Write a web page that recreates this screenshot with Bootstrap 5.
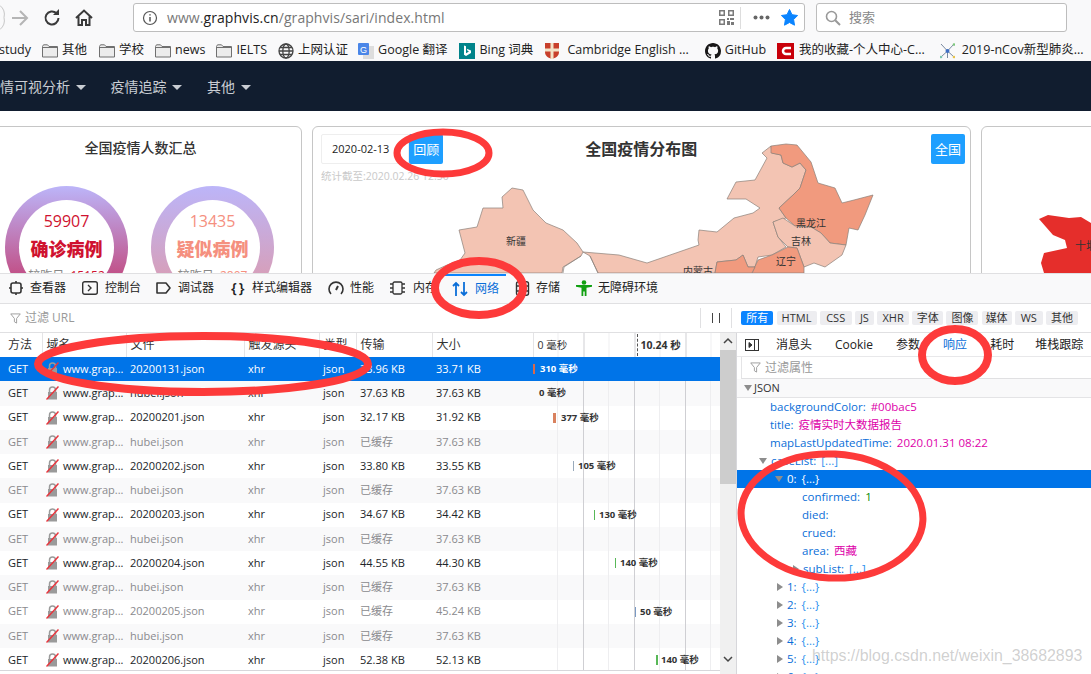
<!DOCTYPE html>
<html lang="zh-CN">
<head>
  <meta charset="UTF-8">
  <meta name="viewport" content="width=device-width, initial-scale=1.0">
  <title>疫情可视分析</title>
  <link href="https://cdn.jsdelivr.net/npm/bootstrap@5.3.0/dist/css/bootstrap.min.css" rel="stylesheet">
  <style>
    html, body { height: 100%; }
    body {
      width: 1091px;
      height: 674px;
      overflow: hidden;
      position: relative;
      font-family: "Open Sans", "Noto Sans CJK SC", sans-serif;
      font-size: 12px;
      color: #222;
      background: #fff;
    }

    /* browser chrome */
    .top-bar { height: 40px; background: #f9f9fa; padding: 3px 24px 0 0; }
    .nav-btns { width: 133px; height: 29px; }
    .url-box, .search-box {
      height: 29px;
      background: #fff;
      border: 1px solid #bdbdbd;
      border-radius: 3px;
    }
    .url-box { width: 672px; margin-right: 11px; padding: 0 6px 0 8px; color: #777; font-size: 14px; }
    .url-box b { font-weight: 400; color: #222; }
    .search-box { width: 251px; padding: 0 8px; color: #888; font-size: 13px; }
    .url-text { margin-left: 9px; white-space: nowrap; letter-spacing: .07px; }
    .url-sep { width: 1px; height: 22px; background: #ddd; margin: 0 12px 0 6px; }
    .marks { height: 21px; background: #f9f9fa; font-size: 12.5px; white-space: nowrap; color: #222; overflow: hidden; }
    .mark-item { display: flex; align-items: center; gap: 4px; flex: none; }

    /* page */
    .site-nav { height: 50px; background: #111d2f; padding: 0; }
    .site-nav .nav-link { color: #c9cdd3; font-size: 14px; padding: 0; margin-right: 25px; }
    .site-nav .nav-link:first-child { margin-left: -14px; }
    .site-nav .dropdown-toggle::after { border-top: .42em solid; border-right: .42em solid transparent; border-left: .42em solid transparent; border-bottom: 0; margin-left: 5.5px; vertical-align: .1em; }
    .page-area { height: 162px; overflow: hidden; position: relative; padding-top: 15px; gap: 10px; margin-left: -21px; }
    .map-layer { position: absolute; left: 21px; top: 0; width: 1091px; height: 162px; }
    .sum-card, .map-card, .city-card { height: 220px; border-color: #c6c6c6; border-radius: 6px; flex: none; }
    .sum-card { width: 323px; }
    .map-card { width: 659px; padding: 7px 5px 0 8px; }
    .city-card { width: 140px; }
    .sum-title { text-align: center; font-size: 14px; font-weight: 500; color: #333; margin-top: 11px; line-height: 20px; }
    .rings { gap: 23px; margin: 28px 0 0 25px; }
    .ring { width: 123px; height: 123px; border-radius: 50%; padding: 14px; flex: none; }
    .ring-red { background: linear-gradient(#bcb5f9, #c32a5c); }
    .ring-pink { background: linear-gradient(#bcb5f9, #e097a3); }
    .ring-in { background: #fff; border-radius: 50%; height: 100%; text-align: center; padding-top: 11px; }
    .ring-num { font-size: 16px; line-height: 20px; }
    .ring-name { font-size: 18px; font-weight: 900; line-height: 28px; margin-top: 4px; white-space: nowrap; }
    .ring-sub { font-size: 12px; color: #888; line-height: 18px; white-space: nowrap; margin-top: 4px; }
    .red-txt { color: #cf1230; }
    .pink-txt { color: #f5907f; }
    .date-box { width: 89px; height: 30px; border: 1px solid #eee; border-radius: 2px 0 0 2px; font-size: 11px; line-height: 28px; padding-left: 10px; color: #222; }
    .blue-btn { width: 34px; height: 30px; background: #1e9fff; color: #fff; border-radius: 2px; font-size: 13px; line-height: 30px; text-align: center; padding: 0; border: 0; }
    .stat-note { color: #c9c9c9; font-size: 10.5px; line-height: 14px; margin-top: 5px; white-space: nowrap; }
    .map-title { font-size: 16px; font-weight: 700; color: #333; line-height: 30px; width: 112px; white-space: nowrap; margin: 0 234px 0 142px; }

    /* devtools */
    .dev { height: 401px; background: #fff; border-top: 1px solid #e0e0e2; position: relative; }
    .dev-tabs { height: 30px; background: #f9f9fa; border-bottom: 1px solid #e0e0e2; color: #222; padding: 0 0 1px 9px; }
    .dev-tab { display: flex; align-items: center; gap: 7px; flex: none; height: 100%; white-space: nowrap; }
    .dev-tab.on { color: #0a6ed8; border-top: 2px solid #0a84ff; width: 62px; padding-left: 8px; margin: 0 9px 0 -8px; }
    .curly-ico { font-size: 15px; font-weight: 600; width: 16px; line-height: 14px; white-space: nowrap; letter-spacing: -1px; margin-top: -3px; }
    .filter-bar { height: 29px; border-bottom: 1px solid #e0e0e2; color: #999; font-size: 12px; padding-left: 10px; }
    .bar-sep { width: 1px; height: 20px; background: #e0e0e2; }
    .pause-ico { margin: 0 10px; }
    .type-chip { height: 14px; line-height: 14px; font-size: 11px; background: #ededf0; color: #333; border-radius: 2px; text-align: center; flex: none; margin-right: 3.2px; }
    .type-chip.on { background: #0a84ff; color: #fff; }
    .split-box { height: 342px; }
    .req-side { width: 737px; flex: none; position: relative; border-right: 1px solid #d7d7db; }
    .req-scroll { width: 720px; flex: none; height: 338px; overflow: hidden; border-bottom: 1px solid #d7d7db; }
    .sb-rail { width: 16px; flex: none; background: #f0f0f0; }
    .sb-thumb { height: 134px; background: #cdcdcd; margin-top: 17px; }
    .sb-down { margin-top: 166px; }
    .req-table { table-layout: fixed; width: 720px; margin: 0; font-size: 11px; white-space: nowrap; }
    .req-table th, .req-table td { padding: 0 0 0 4px; border: 0; overflow: hidden; background: transparent; color: inherit; box-shadow: none; vertical-align: middle; }
    .req-table thead th { height: 24px; font-size: 12px; font-weight: 400; color: #333; border-right: 1px solid #e4e4e6; background: #fff; }
    .req-table tbody tr { height: 24.25px; }
    .req-table tbody tr:nth-child(even) { background: #f9f9fa; }
    .req-table tr.dim { color: #8a8a8e; }
    .req-table tr.sel { background: #0074e8 !important; color: #fff; }
    .req-table .wf, .req-table thead th.wf {
      padding: 0;
      background: repeating-linear-gradient(90deg, transparent 0 24.5px, #eeeef0 24.5px 25.5px, transparent 25.5px 50px, #cfcfd3 50px 51px);
    }
    .req-table tr.sel td.wf { background: none; }
    .wf-head { font-size: 10.5px; padding-left: 4px; }
    .wf-mark { border-left: 1px dashed #555; padding-left: 3px; margin-left: 49px; font-weight: 700; line-height: 22px; }
    .wf-bar { height: 10px; flex: none; }
    .wf-txt { font-size: 9.5px; font-weight: 700; color: #333; }
    .sel .wf-txt { color: #fff; }
    .detail-side { flex: 1; min-width: 0; overflow: hidden; }
    .detail-tabs { height: 24px; white-space: nowrap; color: #222; font-size: 12px; border-bottom: 1px solid #e8e8ea; background: #fff; }
    .prop-filter { height: 22px; border-bottom: 1px solid #e0e0e2; color: #999; font-size: 12px; padding-left: 8px; margin-left: 4px; border-left: 1px solid #e4e4e6; gap: 4px; }
    .json-head { height: 19px; background: #f9f9fa; border-bottom: 1px solid #e4e4e6; font-size: 11px; padding-left: 7px; color: #333; gap: 3px; }
    .tree-row { height: 18px; line-height: 18px; font-size: 11.5px; white-space: nowrap; color: #0a6ed8; display: flex; align-items: center; gap: 5px; }
    .tree-row.sel { background: #0074e8; color: #fff; }
    .tree-row.sel .v-obj { color: #fff; }
    .v-str { color: #dd00a9; }
    .v-num { color: #058b00; }
    .v-obj { color: #2a8fee; }
    .tw { width: 0; height: 0; border-style: solid; flex: none; margin-right: -1px; }
    .tw-r { border-width: 4.5px 0 4.5px 6px; border-color: transparent transparent transparent #8d8d8d; }
    .tw-d { border-width: 6px 4.5px 0 4.5px; border-color: #8d8d8d transparent transparent transparent; }

    /* marker strokes and the site watermark sit over everything */
    .marker-layer { position: absolute; left: 0; top: 0; width: 1091px; height: 674px; pointer-events: none; z-index: 5; }
    .watermark { position: absolute; left: 812px; top: 644px; font-family: "Liberation Sans", sans-serif; font-size: 15.9px; color: rgba(150,150,150,.45); z-index: 4; white-space: nowrap; }
    svg { display: block; flex: none; }
  </style>
</head>
<body>
  <svg width="0" height="0" class="position-absolute">
    <symbol id="folder" viewBox="0 0 16 14"><path d="M.5 2.500V13h15V2.500H7L5.500.8H1.500Z" fill="#ececec" stroke="#707070"/><path d="M.5 3.500h15" stroke="#707070"/></symbol>
    <symbol id="lock" viewBox="0 0 13 14"><rect x="2" y="6" width="9" height="7.500" fill="#9a9a9a"/><path d="M3.500 6V4a3 3 0 0 1 6 0v2" fill="none" stroke="#9a9a9a" stroke-width="1.500"/><path d="M.5 13.500 12.500 .5" stroke="#e8343c" stroke-width="1.500"/></symbol>
    <symbol id="funnel" viewBox="0 0 12 12"><path d="M.8 1h10.400L7.200 6v5L4.800 9.600V6Z" fill="none" stroke="#999"/></symbol>
  </svg>

  <div class="top-bar d-flex">
    <div class="nav-btns d-flex align-items-center position-relative">
      <svg width="133" height="29" viewBox="0 0 133 29">
        <path d="M0 2.500a12 12 0 0 1 4 12 12 12 0 0 1-4 12" fill="none" stroke="#c6c6c6"/>
        <path d="M12 15h15M20 8l7 7-7 7" fill="none" stroke="#b5b5b5" stroke-width="2"/>
        <path d="M58.500 15a6.500 6.500 0 1 1-2-4.800" fill="none" stroke="#3a3a3a" stroke-width="2"/>
        <path d="M59 6v6h-6Z" fill="#3a3a3a"/>
        <path d="M76 15l8-7.500 8 7.500M78.500 13.500V22h3.500v-5h4v5h3.500v-8.500" fill="none" stroke="#3a3a3a" stroke-width="2"/>
      </svg>
    </div>
    <div class="url-box d-flex align-items-center">
      <svg width="16" height="16" viewBox="0 0 16 16"><circle cx="8" cy="8" r="6.500" fill="none" stroke="#555" stroke-width="1.200"/><path d="M8 7v4.500M8 4.200v1.400" stroke="#555" stroke-width="1.500"/></svg>
      <span class="url-text">www.<b>graphvis.cn</b>/graphvis/sari/index.html</span>
      <span class="flex-grow-1"></span>
      <svg width="15" height="15" viewBox="0 0 15 15" fill="#7a7a7a"><path d="M0 0h6v6H0Zm1.500 1.500v3h3v-3ZM9 0h6v6H9Zm1.500 1.500v3h3v-3ZM0 9h6v6H0Zm1.500 1.500v3h3v-3ZM8 8h2v2H8Zm3 0h4v2h-4Zm-3 3h3v4H8Zm4 1h3v3h-3Z"/></svg>
      <span class="url-sep"></span>
      <svg width="17" height="5" viewBox="0 0 17 5" fill="#666"><circle cx="2.500" cy="2.500" r="2"/><circle cx="8.500" cy="2.500" r="2"/><circle cx="14.500" cy="2.500" r="2"/></svg>
      <svg width="17" height="17" viewBox="0 0 17 17" style="margin-left:11px"><path d="M8.500.5l2.500 5.200 5.600.8-4 4 .9 5.700-5-2.700-5 2.700.9-5.700-4-4 5.600-.8Z" fill="#0a84ff" stroke="#0a84ff" stroke-linejoin="round"/></svg>
    </div>
    <div class="search-box d-flex align-items-center gap-2">
      <svg width="16" height="16" viewBox="0 0 16 16"><circle cx="6.500" cy="6.500" r="5" fill="none" stroke="#999" stroke-width="1.600"/><path d="M10.200 10.200 15 15" stroke="#999" stroke-width="2"/></svg>
      <span>搜索</span>
    </div>
  </div>

  <div class="marks d-flex align-items-center">
    <span class="mark-item" style="margin-left:-1px">study</span>
    <span class="mark-item" style="margin-left:11px"><svg width="16" height="14"><use href="#folder"/></svg>其他</span>
    <span class="mark-item" style="margin-left:12px"><svg width="16" height="14"><use href="#folder"/></svg>学校</span>
    <span class="mark-item" style="margin-left:11px"><svg width="16" height="14"><use href="#folder"/></svg>news</span>
    <span class="mark-item" style="margin-left:11px"><svg width="16" height="14"><use href="#folder"/></svg>IELTS</span>
    <span class="mark-item" style="margin-left:11px"><svg width="16" height="16" viewBox="0 0 16 16" fill="none" stroke="#444" stroke-width="1.300"><circle cx="8" cy="8" r="7"/><ellipse cx="8" cy="8" rx="3.200" ry="7"/><path d="M1 8h14M2 4.500h12M2 11.500h12"/></svg>上网认证</span>
    <span class="mark-item" style="margin-left:10px"><svg width="16" height="16" viewBox="0 0 16 16"><rect x="5" y="3" width="11" height="13" fill="#ddd"/><rect width="11" height="12" rx="1" fill="#4a86e8"/><text x="5.500" y="9.500" font-size="9" fill="#fff" text-anchor="middle" font-family="Liberation Sans">G</text></svg>Google 翻译</span>
    <span class="mark-item" style="margin-left:12px"><svg width="16" height="16" viewBox="0 0 16 16"><rect width="16" height="16" fill="#00838a"/><path d="M5 2.500 7 3.200v7l3-1.600-1.500-.8-.8-2L12 7.500v2.600L7 13l-2-1.200Z" fill="#fff"/></svg>Bing 词典</span>
    <span class="mark-item" style="margin-left:12px;gap:8px"><svg width="14" height="16" viewBox="0 0 14 16"><path d="M0 0h14v9c0 4-3.500 6-7 7-3.500-1-7-3-7-7Z" fill="#c8402c"/><path d="M5.500 0h3v16h-3ZM0 5.500h14v3H0Z" fill="#f3e3c8"/></svg>Cambridge English ...</span>
    <span class="mark-item" style="margin-left:16px"><svg width="16" height="16" viewBox="0 0 16 16"><path fill="#181717" d="M8 0C3.580 0 0 3.580 0 8c0 3.540 2.290 6.530 5.470 7.590.4.070.55-.17.55-.38 0-.19-.01-.82-.01-1.490-2.010.37-2.530-.49-2.690-.94-.09-.23-.48-.94-.82-1.130-.28-.15-.68-.52-.01-.53.63-.01 1.080.58 1.230.82.72 1.210 1.870.87 2.330.66.07-.52.28-.87.51-1.070-1.780-.2-3.640-.89-3.640-3.950 0-.87.31-1.590.82-2.150-.08-.2-.36-1.020.08-2.120 0 0 .67-.21 2.200.82.64-.18 1.320-.27 2-.27.68 0 1.360.09 2 .27 1.530-1.040 2.200-.82 2.200-.82.44 1.100.16 1.920.08 2.120.51.56.82 1.270.82 2.150 0 3.070-1.870 3.750-3.650 3.950.29.25.54.73.54 1.480 0 1.070-.01 1.930-.01 2.200 0 .21.15.46.55.38A8.013 8.013 0 0016 8c0-4.420-3.580-8-8-8z"/></svg>GitHub</span>
    <span class="mark-item" style="margin-left:11px;gap:5px"><svg width="17" height="16" viewBox="0 0 17 16"><rect width="17" height="16" fill="#c8000a"/><path d="M14 5H9a3 3 0 0 0 0 6h5" fill="none" stroke="#fff" stroke-width="2.500"/></svg>我的收藏-个人中心-C...</span>
    <span class="mark-item" style="margin-left:15px;gap:7px"><svg width="15" height="16" viewBox="0 0 15 16"><path d="M1 1l6.500 7L14 1M1 14l6.500-6L14 14M7.500 8v7" stroke="#7a8aa0" fill="none"/><circle cx="7.500" cy="8" r="2" fill="#3f6fc4"/><circle cx="14" cy="1.500" r="1.300" fill="#7cc67c"/><circle cx="1" cy="14" r="1.300" fill="#7cc6b0"/><circle cx="14" cy="14" r="1.300" fill="#e6c34d"/></svg>2019-nCov新型肺炎...</span>
  </div>

  <nav class="navbar site-nav flex-nowrap justify-content-start">
    <a class="nav-link dropdown-toggle" href="#">疫情可视分析</a>
    <a class="nav-link dropdown-toggle" href="#">疫情追踪</a>
    <a class="nav-link dropdown-toggle" href="#">其他</a>
  </nav>

  <div class="page-area d-flex">
    <div class="card sum-card">
      <div class="sum-title">全国疫情人数汇总</div>
      <div class="rings d-flex">
        <div class="ring ring-red"><div class="ring-in">
          <div class="ring-num red-txt">59907</div>
          <div class="ring-name red-txt">确诊病例</div>
          <div class="ring-sub">较昨日: <span class="red-txt">15152</span></div>
        </div></div>
        <div class="ring ring-pink"><div class="ring-in">
          <div class="ring-num pink-txt">13435</div>
          <div class="ring-name pink-txt">疑似病例</div>
          <div class="ring-sub">较昨日: <span class="pink-txt">2807</span></div>
        </div></div>
      </div>
    </div>
    <div class="card map-card">
      <div class="d-flex">
        <div class="date-box">2020-02-13</div>
        <button class="blue-btn">回顾</button>
        <div class="map-title">全国疫情分布图</div>
        <button class="blue-btn">全国</button>
      </div>
      <div class="stat-note">统计截至:2020.02.26 12:30</div>
    </div>
    <div class="card city-card"></div>

    <svg class="map-layer" viewBox="0 111 1091 162" font-family="'Noto Sans CJK SC',sans-serif" font-size="10" fill="#333">
      <g stroke="#8a8078" stroke-width=".7" stroke-linejoin="round">
        <path fill="#f3c4b3" d="M512 188 523 190 528 200 533 210 546 223 563 230 577 243 583 252 581 256 563 267 562 273H434L436 270 447 265 460 260 465 253 459 230 477 227 483 208 503 208 502 197Z"/>
        <path fill="#f3c4b3" d="M583 252 619 255 647 263 699 245 698 240 699 230 717 232 734 218 753 213 760 208 746 199 727 199 736 182 755 180 767 158 762 153 771 146 772 153 781 155 783 163 792 167 800 163 806 170 800 188 793 195 779 208 786 218 773 222 778 237 786 247 772 255 758 257 755 267 748 267 743 255 736 260 717 262 715 273H598L590 256Z"/>
        <path fill="#f19a7e" d="M771 146 786 144 797 145 811 162 818 183 835 188 842 203 854 200 873 195 865 215 858 230 849 228 846 245 830 243 821 233 811 227 795 226 786 218 779 208 793 195 800 188 806 170 800 163 792 167 783 163 781 155 771 153Z"/>
        <path fill="#f3c4b3" d="M773 222 783 218 795 226 811 227 821 233 830 243 846 245 842 255 825 267 814 263 804 267 797 248 788 247 778 237Z"/>
        <path fill="#f19a7e" d="M788 247 797 248 804 267 804 273H752L758 260 772 255Z"/>
        <path fill="#f19a7e" d="M715 273 717 262 736 260 743 255 748 267 755 267 752 273Z"/>
        <path fill="none" d="M563 273 564 267 581 256M590 256 598 273"/>
      </g>
      <path fill="#e52e2b" d="M1039 219 1048 215 1069 218 1081 217 1091 223V273H1044L1041 263 1044 253 1067 248 1065 240 1053 235Z"/>
      <text x="506" y="245">新疆</text>
      <text x="796" y="227">黑龙江</text>
      <text x="791" y="245">吉林</text>
      <text x="776" y="265">辽宁</text>
      <text x="683" y="275">内蒙古</text>
      <text x="1075" y="250" font-size="11">十堰</text>
    </svg>
  </div>

  <div class="dev">
    <div class="dev-tabs d-flex align-items-center">
      <span class="dev-tab" style="width:73px"><svg width="14" height="14" viewBox="0 0 14 14" fill="none" stroke="#333" stroke-width="1.600"><rect x="2" y="2" width="10" height="10" rx="2"/><path d="M7 0v2M7 12v2M0 7h2M12 7h2"/></svg>查看器</span>
      <span class="dev-tab" style="width:74px"><svg width="16" height="14" viewBox="0 0 16 14" fill="none" stroke="#333" stroke-width="1.400"><rect x=".7" y=".7" width="14.600" height="12.600" rx="2"/><path d="M6 4l3 3-3 3"/></svg>控制台</span>
      <span class="dev-tab" style="width:75px"><svg width="15" height="12" viewBox="0 0 15 12" fill="none" stroke="#333" stroke-width="1.600"><path d="M1 1h9l4 5-4 5H1Z" stroke-linejoin="round"/></svg>调试器</span>
      <span class="dev-tab" style="width:97px;gap:5px"><span class="curly-ico">{ }</span>样式编辑器</span>
      <span class="dev-tab" style="width:62px;gap:6px"><svg width="16" height="14" viewBox="0 0 16 14" fill="none" stroke="#333" stroke-width="1.600"><path d="M3 13a7 7 0 1 1 10 0"/><path d="M8 9l2-4" stroke-width="2"/></svg>性能</span>
      <span class="dev-tab" style="width:62px;gap:8px"><svg width="15" height="14" viewBox="0 0 15 14" fill="none" stroke="#333" stroke-width="1.300"><rect x="3" y="1" width="9" height="12" rx="1.500"/><path d="M0 3h3M0 7h3M0 11h3M12 3h3M12 7h3M12 11h3"/></svg>内存</span>
      <span class="dev-tab on"><svg width="16" height="16" viewBox="0 0 16 16" fill="none" stroke="#0a6ed8" stroke-width="1.800"><path d="M4 15V2M1 5l3-3 3 3M12 1v13M9 11l3 3 3-3"/></svg>网络</span>
      <span class="dev-tab" style="width:61px;gap:6px"><svg width="15" height="15" viewBox="0 0 15 15" fill="none" stroke="#333" stroke-width="1.400"><rect x="1.500" y=".7" width="12" height="13.600" rx="2"/><path d="M1.500 5h12M1.500 10h12"/></svg>存储</span>
      <span class="dev-tab" style="gap:6px"><svg width="16" height="16" viewBox="0 0 16 16" fill="#12a012"><circle cx="8" cy="2.500" r="2.300"/><path d="M0 5h16v1.800l-5.500 1V16H8.700v-4.500H7.300V16H5.500V7.800L0 6.800Z"/></svg>无障碍环境</span>
    </div>

    <div class="filter-bar d-flex align-items-center">
      <svg width="11" height="11"><use href="#funnel"/></svg>
      <span class="ms-1">过滤 URL</span>
      <span class="flex-grow-1"></span>
      <span class="bar-sep"></span>
      <svg width="10" height="10" viewBox="0 0 10 10" class="pause-ico" stroke="#444"><path d="M1.500 0v10M8.500 0v10"/></svg>
      <span class="bar-sep" style="margin-right:9px"></span>
      <span class="type-chip on" style="width:32px">所有</span>
      <span class="type-chip" style="width:40px">HTML</span>
      <span class="type-chip" style="width:32px">CSS</span>
      <span class="type-chip" style="width:19px">JS</span>
      <span class="type-chip" style="width:32px">XHR</span>
      <span class="type-chip" style="width:31px">字体</span>
      <span class="type-chip" style="width:32px">图像</span>
      <span class="type-chip" style="width:30px">媒体</span>
      <span class="type-chip" style="width:28px">WS</span>
      <span class="type-chip" style="width:32px;margin-right:13px">其他</span>
    </div>

    <div class="split-box d-flex">
      <div class="req-side d-flex">
        <div class="req-scroll">
          <table class="table req-table">
            <colgroup><col style="width:42px"><col style="width:84px"><col style="width:118px"><col style="width:75px"><col style="width:37px"><col style="width:76px"><col style="width:101px"><col></colgroup>
            <thead><tr>
              <th class="ps-2">方法</th><th>域名</th><th>文件</th><th>触发源头</th><th>类型</th><th>传输</th><th>大小</th>
              <th class="border-0 wf">
                <div class="d-flex wf-head"><span style="width:50px;line-height:22px">0 毫秒</span><span class="wf-mark">10.24 秒</span></div>
              </th>
            </tr></thead>
            <tbody id="reqRows"></tbody>
          </table>
        </div>
        <div class="sb-rail">
          <svg width="16" height="17" viewBox="0 0 16 17" class="position-absolute"><path d="M4 10l4-4 4 4" fill="none" stroke="#444" stroke-width="1.500"/></svg>
          <div class="sb-thumb"></div>
          <svg width="16" height="17" viewBox="0 0 16 17" class="sb-down"><path d="M4 7l4 4 4-4" fill="none" stroke="#444" stroke-width="1.500"/></svg>
        </div>
      </div>

      <div class="detail-side">
        <div class="detail-tabs d-flex align-items-center">
          <svg width="14" height="12" viewBox="0 0 14 12" class="ms-2" fill="none" stroke="#333"><rect x=".5" y=".5" width="13" height="11"/><path d="M9.500 .5v11"/><path d="M4 3.500 7 6l-3 2.500Z" fill="#333"/></svg>
          <span style="margin-left:17px">消息头</span>
          <span style="margin-left:23px">Cookie</span>
          <span style="margin-left:23px">参数</span>
          <span style="margin-left:23px;color:#0a6ed8">响应</span>
          <span style="margin-left:23px">耗时</span>
          <span style="margin-left:21px">堆栈跟踪</span>
        </div>
        <div class="prop-filter d-flex align-items-center">
          <svg width="11" height="11"><use href="#funnel"/></svg>
          <span>过滤属性</span>
        </div>
        <div class="json-head d-flex align-items-center"><span class="tw tw-d"></span><span>JSON</span></div>
        <div id="jsonTree"></div>
      </div>
    </div>
  </div>

  <div class="watermark">https://blog.csdn.net/weixin_38682893</div>

  <svg class="marker-layer" viewBox="0 0 1091 674" fill="none" stroke="#fd3a3a">
    <ellipse cx="443" cy="153" rx="46" ry="21" stroke-width="7"/>
    <ellipse cx="479" cy="288" rx="44" ry="27" stroke-width="8"/>
    <ellipse cx="203" cy="364" rx="165" ry="28" stroke-width="8"/>
    <ellipse cx="955" cy="355" rx="33" ry="26" stroke-width="8"/>
    <ellipse cx="832" cy="516" rx="91" ry="62" stroke-width="7" transform="rotate(3 832 516)"/>
  </svg>

  <script src="https://cdn.jsdelivr.net/npm/bootstrap@5.3.0/dist/js/bootstrap.bundle.min.js"></script>
  <script>
    // request rows: [file, transferred, size, bar offset, bar colour, bar width, gap, label, row class]
    const requests = [
      ['20200131.json', '33.96 KB', '33.71 KB', 0, '#d9694a', 2, 5, '310 毫秒', 'sel'],
      ['hubei.json', '37.63 KB', '37.63 KB', 6, '', 0, 0, '0 毫秒', ''],
      ['20200201.json', '32.17 KB', '31.92 KB', 20, '#d9825f', 3, 5, '377 毫秒', ''],
      ['hubei.json', '已缓存', '37.63 KB', 0, '', 0, 0, '', 'dim'],
      ['20200202.json', '33.80 KB', '33.55 KB', 40, '#9ab', 1, 4, '105 毫秒', ''],
      ['hubei.json', '已缓存', '37.63 KB', 0, '', 0, 0, '', 'dim'],
      ['20200203.json', '34.67 KB', '34.42 KB', 61, '#58b858', 1, 4, '130 毫秒', ''],
      ['hubei.json', '已缓存', '37.63 KB', 0, '', 0, 0, '', 'dim'],
      ['20200204.json', '44.55 KB', '44.30 KB', 82, '#58b858', 1, 4, '140 毫秒', ''],
      ['hubei.json', '已缓存', '37.63 KB', 0, '', 0, 0, '', 'dim'],
      ['20200205.json', '已缓存', '45.24 KB', 102, '#7a9ac4', 1, 4, '50 毫秒', 'dim'],
      ['hubei.json', '已缓存', '37.63 KB', 0, '', 0, 0, '', 'dim'],
      ['20200206.json', '52.38 KB', '52.13 KB', 123, '#58b858', 2, 3, '140 毫秒', '']
    ];

    document.getElementById('reqRows').innerHTML = requests.map(r => `
      <tr class="${r[8]}">
        <td class="ps-2">GET</td>
        <td><div class="d-flex align-items-center gap-1"><svg width="13" height="14"><use href="#lock"/></svg><span>www.grap...</span></div></td>
        <td>${r[0]}</td><td>xhr</td><td>json</td><td>${r[1]}</td><td>${r[2]}</td>
        <td class="wf">${r[7] ? `<div class="d-flex align-items-center" style="margin-left:${r[3]}px">
          ${r[4] ? `<span class="wf-bar" style="background:${r[4]};width:${r[5]}px;margin-right:${r[6]}px"></span>` : ''}<span class="wf-txt">${r[7]}</span></div>` : ''}</td>
      </tr>`).join('');

    // json tree: [indent, triangle, key, value, value class, row class]
    const tree = [
      [33, '', 'backgroundColor', '#00bac5', 'v-str'],
      [33, '', 'title', '疫情实时大数据报告', 'v-str'],
      [33, '', 'mapLastUpdatedTime', '2020.01.31 08:22', 'v-str'],
      [22, 'd', 'caseList', '[...]', 'v-obj'],
      [38, 'd', '0', '{...}', 'v-obj', 'sel'],
      [65, '', 'confirmed', '1', 'v-num'],
      [65, '', 'died', '', ''],
      [65, '', 'crued', '', ''],
      [65, '', 'area', '西藏', 'v-str'],
      [56, 'r', 'subList', '[...]', 'v-obj'],
      [40, 'r', '1', '{...}', 'v-obj'],
      [40, 'r', '2', '{...}', 'v-obj'],
      [40, 'r', '3', '{...}', 'v-obj'],
      [40, 'r', '4', '{...}', 'v-obj'],
      [40, 'r', '5', '{...}', 'v-obj'],
      [40, 'r', '6', '{...}', 'v-obj']
    ];

    document.getElementById('jsonTree').innerHTML = tree.map(n => `
      <div class="tree-row ${n[5] || ''}" style="padding-left:${n[0]}px">
        ${n[1] ? `<span class="tw tw-${n[1]}"></span>` : ''}<span>${n[2]}:</span><span class="${n[4]}">${n[3]}</span>
      </div>`).join('');
  </script>
</body>
</html>
